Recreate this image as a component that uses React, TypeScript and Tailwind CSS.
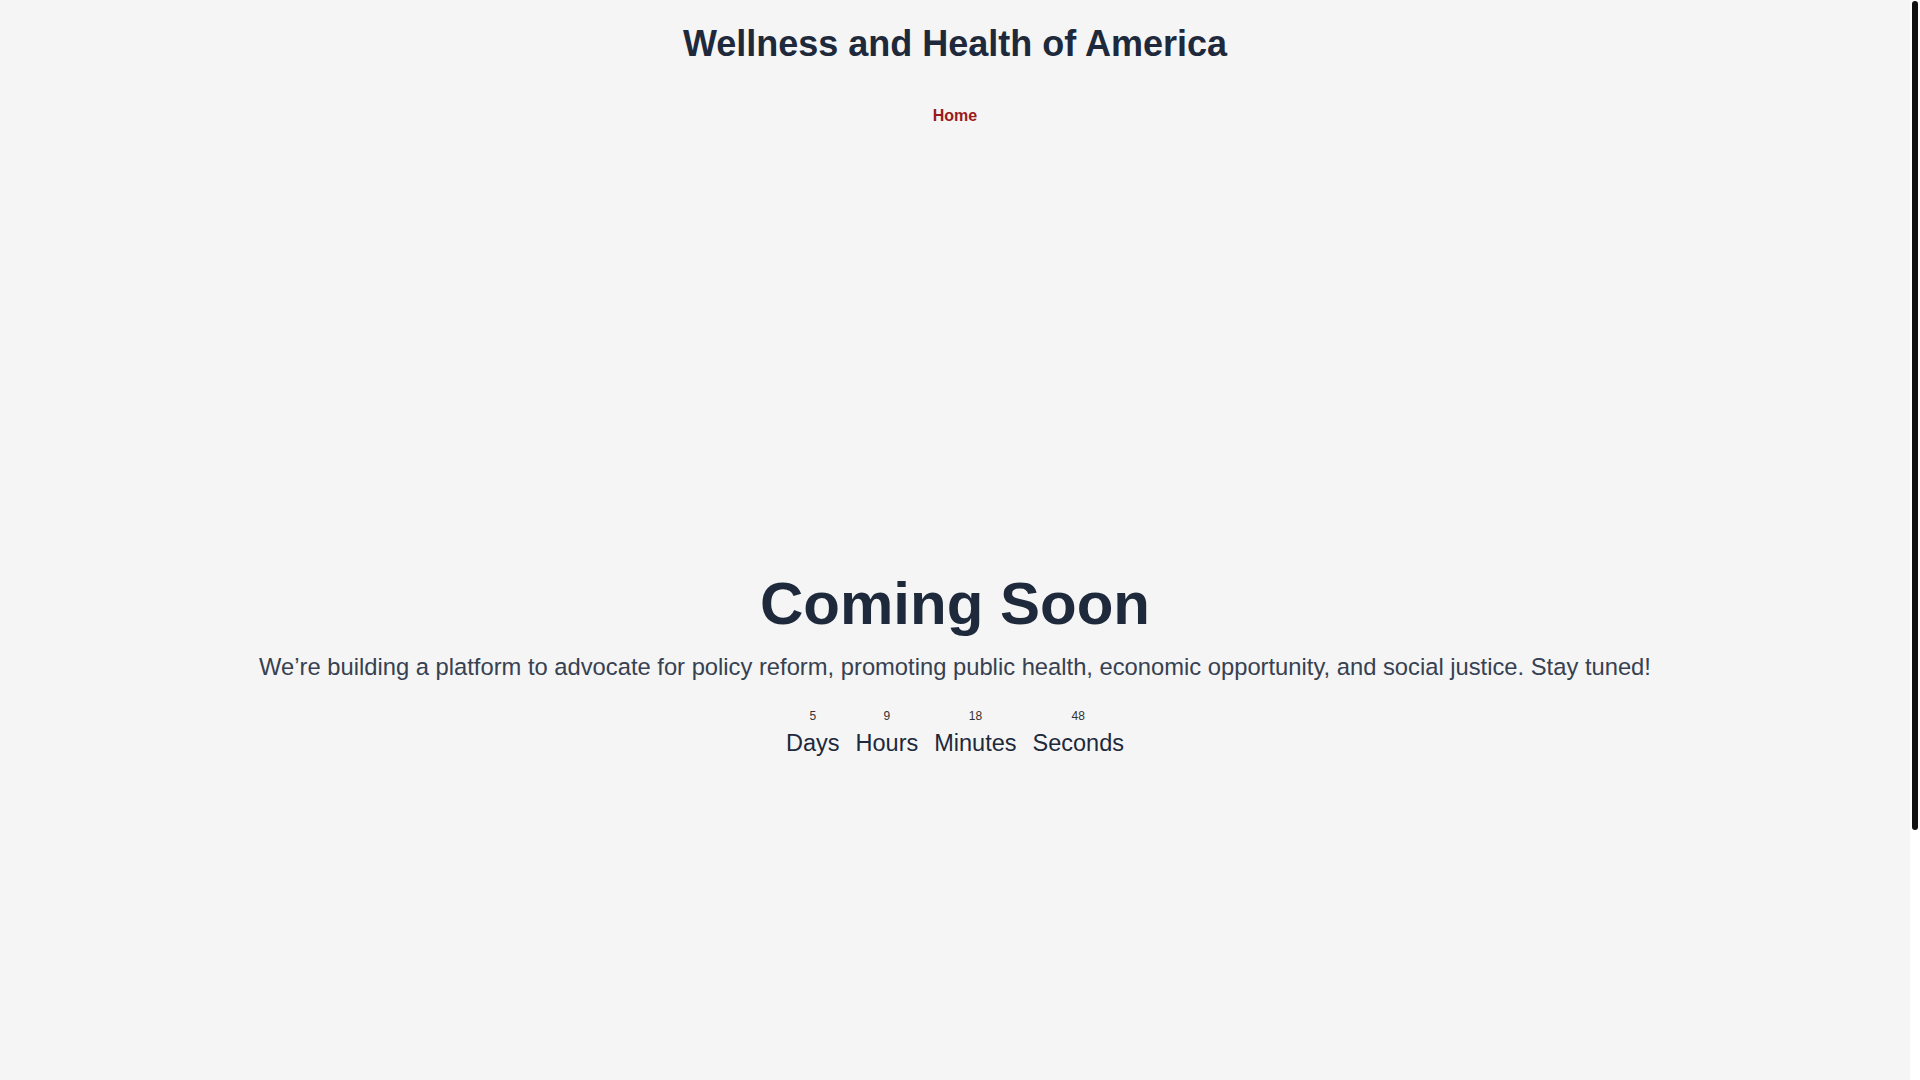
import React from "react";

export default function App() {
  const items = [
    { n: "5", l: "Days" },
    { n: "9", l: "Hours" },
    { n: "18", l: "Minutes" },
    { n: "48", l: "Seconds" },
  ];
  return (
    <div
      className="flex h-screen overflow-hidden bg-[#f5f5f5]"
      style={{ fontFamily: '"Liberation Sans", Arial, sans-serif' }}
    >
      <div className="min-w-0 flex-1 overflow-hidden">
        <header className="flex flex-col items-center pt-[24px]">
          <h1 className="text-4xl font-bold leading-10 text-[#1e293b]">
            Wellness and Health of America
          </h1>
          <nav className="mt-10 flex gap-6">
            <a href="#" className="text-base font-bold leading-6 text-[#991b1b]">
              Home
            </a>
          </nav>
        </header>
        <main className="flex h-[1076px] flex-col items-center justify-center text-center">
          <h2 className="text-6xl font-bold leading-none text-[#1e293b]">Coming Soon</h2>
          <p className="mt-[17px] text-[23.75px] leading-8 text-[#374151]">
            We’re building a platform to advocate for policy reform, promoting public health, economic opportunity, and social justice. Stay tuned!
          </p>
          <div className="mt-[25px] flex gap-4">
            {items.map((it) => (
              <div key={it.l} className="flex flex-col items-center">
                <span className="text-xs leading-4 text-[#333333]">{it.n}</span>
                <span className="mt-[3px] text-[23.5px] leading-8 text-[#1e293b]">{it.l}</span>
              </div>
            ))}
          </div>
        </main>
        <footer className="h-[198px]" />
      </div>
      <aside className="w-[10px] shrink-0 bg-white px-[2px] pt-[1px]">
        <div className="h-[829px] rounded-full bg-[#111111]" />
      </aside>
    </div>
  );
}
